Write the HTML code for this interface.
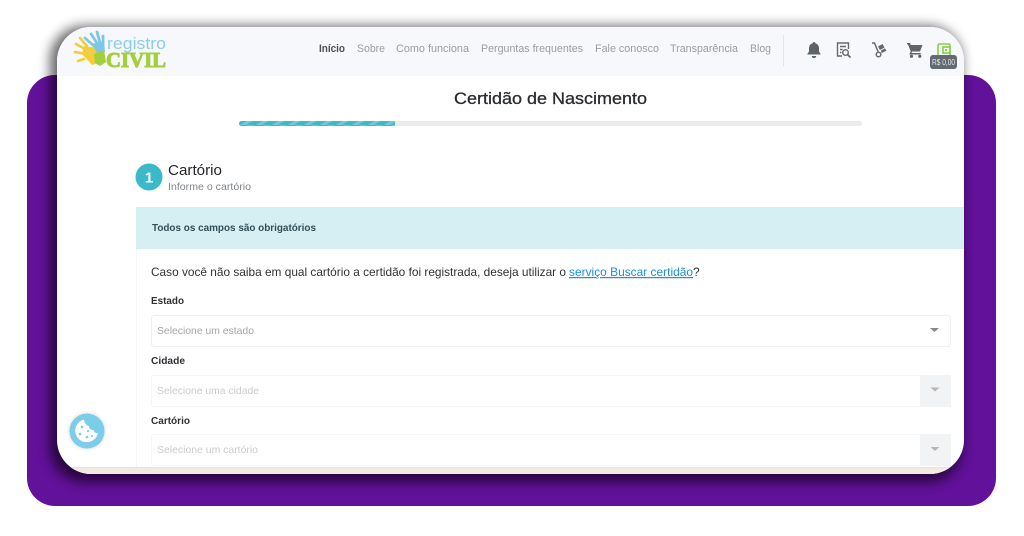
<!DOCTYPE html>
<html><head><meta charset="utf-8"><style>
html,body{margin:0;padding:0;background:#fff;width:1024px;height:536px;overflow:hidden}
svg{display:block}
text{font-family:"Liberation Sans",sans-serif}
text.slab{font-family:"Liberation Serif",serif}
</style></head><body>
<svg width="1024" height="536" viewBox="0 0 1024 536" xmlns="http://www.w3.org/2000/svg">
<defs>
<filter id="s" x="-10%" y="-10%" width="120%" height="125%"><feGaussianBlur stdDeviation="6"/></filter>
<filter id="sc" x="-30%" y="-30%" width="160%" height="160%"><feGaussianBlur stdDeviation="1.5"/></filter>
<filter id="b" x="-5%" y="-5%" width="110%" height="110%"><feGaussianBlur stdDeviation="0.3"/></filter>
<clipPath id="card"><rect x="57" y="27" width="907" height="447" rx="34"/></clipPath>
<pattern id="st" width="16" height="5" patternUnits="userSpaceOnUse"><rect width="16" height="5" fill="#3bb9c9"/><path d="M0 5L8 0H14L6 5Z" fill="#6ccdd8"/></pattern>
</defs>
<rect x="27" y="75" width="969" height="431" rx="28" fill="#62119a"/>
<rect x="50" y="26" width="912" height="456" rx="34" fill="#000" opacity=".6" filter="url(#s)"/>
<g clip-path="url(#card)">
<rect x="57" y="27" width="907" height="447" fill="#fff"/>
<rect x="57" y="27" width="907" height="49" fill="#f7f8fb"/>
<rect x="57" y="468" width="907" height="6" fill="#f3ebe3"/>
<rect x="57" y="467" width="907" height="1" fill="#e4e4e4"/>
<rect x="136" y="207" width="840" height="42" fill="#d5eff3"/>
<rect x="136" y="249" width="1" height="218" fill="#f3f5f6"/>
</g>

<!-- logo -->
<g filter="url(#b)">
<g stroke="#f2cd3d" stroke-width="2.600" stroke-linecap="round" fill="none">
<path d="M86 54L75 52M85 49L76 44M87 46L80 38M84 59L78 61"/>
</g>
<path d="M84 46L98 48L101 62L92 65L82 54Z" fill="#f2cd3d"/>
<g stroke="#7cc7e6" stroke-width="2.800" stroke-linecap="round" fill="none">
<path d="M94 46L85 38M97 43L91 34M100 43L97 32M103 45L103 36"/>
</g>
<path d="M92 44L104 41L105 52L97 53Z" fill="#7cc7e6"/>
<path d="M94 54L104 50L106 62L100 66L95 63Z" fill="#a4cf3d"/>
<text x="107" y="49" font-size="17" fill="#8ccdec" textLength="59" lengthAdjust="spacingAndGlyphs" font-weight="normal">registro</text>
<text class="slab" x="106" y="67" font-size="21" font-weight="bold" fill="#a4cf3d" stroke="#a4cf3d" stroke-width="1" textLength="60" lengthAdjust="spacingAndGlyphs">CIVIL</text>
</g>

<!-- nav -->
<g font-size="11" fill="#9b9da0" filter="url(#b)">
<text x="319" y="52" fill="#4c4f54" font-weight="bold" textLength="26" lengthAdjust="spacingAndGlyphs">Início</text>
<text x="357" y="52" textLength="28" lengthAdjust="spacingAndGlyphs">Sobre</text>
<text x="396" y="52" textLength="73" lengthAdjust="spacingAndGlyphs">Como funciona</text>
<text x="481" y="52" textLength="102" lengthAdjust="spacingAndGlyphs">Perguntas frequentes</text>
<text x="595" y="52" textLength="64" lengthAdjust="spacingAndGlyphs">Fale conosco</text>
<text x="670" y="52" textLength="68" lengthAdjust="spacingAndGlyphs">Transparência</text>
<text x="750" y="52" textLength="21" lengthAdjust="spacingAndGlyphs">Blog</text>
</g>
<rect x="783" y="35" width="1" height="31" fill="#e5e6e9"/>

<g filter="url(#b)">
<!-- bell -->
<path d="M814 42a1.300 1.300 0 0 1 1.300 1.300c2.600.7 3.700 2.800 3.700 5.200v3l1.500 2.200v.8h-13v-.8l1.500-2.200v-3c0-2.400 1.100-4.500 3.700-5.200A1.300 1.300 0 0 1 814 42ZM811.800 56h4.400a2.200 2.200 0 0 1-4.400 0Z" fill="#5d6268"/>
<!-- doc search -->
<g fill="none" stroke="#666b70" stroke-width="1.400">
<path d="M842 56h-4.500v-13h11v6"/>
<path d="M840 46.500h6M840 49.500h2.500M840 52.500h1.500"/>
<circle cx="845.500" cy="52.500" r="2.800"/>
<path d="M847.500 54.500L850.500 57.500" stroke-width="1.800"/>
</g>
<!-- hand truck -->
<g fill="none" stroke="#666b70" stroke-width="1.500">
<path d="M872 43h2.500l3.500 8.500"/>
<circle cx="878.500" cy="54.500" r="2.300"/>
</g>
<path d="M878 46.500l4.500-2.500 2 3.500-4.500 2.500ZM881 50.500l4-2.200 1.300 2.500-4.800 2.500Z" fill="#666b70"/>
<!-- cart -->
<path d="M907 43h3l.8 2h11.700l-2.500 6.500h-7.800l-.8 1.500h9.300v1.500h-11.500l1.500-3-2.700-7H907Z" fill="#60656b"/>
<circle cx="911.500" cy="56.300" r="1.600" fill="#60656b"/><circle cx="919.800" cy="56.300" r="1.600" fill="#60656b"/>
<!-- wallet -->
<g fill="none" stroke="#85cf4a" stroke-width="1.600">
<rect x="938" y="44" width="12" height="12" rx="1.500"/>
<rect x="943" y="47" width="7" height="6"/>
</g>
<rect x="945" y="49" width="2" height="2" fill="#85cf4a"/>
</g>
<rect x="930" y="55" width="27" height="14" rx="3" fill="#626a72"/>
<text x="932" y="65" font-size="8.500" fill="#e6e8ea" textLength="23" lengthAdjust="spacingAndGlyphs">R$ 0,00</text>

<!-- title -->
<text x="454" y="104" font-size="17" fill="#2a2c2f" stroke="#2a2c2f" stroke-width=".3" textLength="193" lengthAdjust="spacingAndGlyphs">Certidão de Nascimento</text>
<rect x="239" y="121" width="623" height="5" rx="2.500" fill="#e9ebed"/>
<path d="M241.500 121H395V126H241.500A2.500 2.500 0 0 1 241.500 121Z" fill="url(#st)"/>

<!-- step -->
<circle cx="149" cy="177" r="13.500" fill="#3bb9c9"/>
<text x="149" y="182.500" font-size="15" font-weight="bold" fill="#fff" text-anchor="middle">1</text>
<g filter="url(#b)">
<text x="168" y="175" font-size="14.500" fill="#26282b" textLength="54" lengthAdjust="spacingAndGlyphs">Cartório</text>
<text x="168" y="190" font-size="10.500" fill="#80858a" textLength="83" lengthAdjust="spacingAndGlyphs">Informe o cartório</text>
<text x="152" y="231" font-size="10.500" font-weight="bold" fill="#315056" textLength="164" lengthAdjust="spacingAndGlyphs">Todos os campos são obrigatórios</text>
<text x="151" y="276" font-size="12" fill="#2f3235" textLength="415" lengthAdjust="spacingAndGlyphs">Caso você não saiba em qual cartório a certidão foi registrada, deseja utilizar o</text>
<text x="569" y="276" font-size="12" fill="#1a8fe3" text-decoration="underline" textLength="124" lengthAdjust="spacingAndGlyphs">serviço Buscar certidão</text>
<text x="693" y="276" font-size="12" fill="#2f3235">?</text>
<g font-size="10.500" font-weight="bold" fill="#2e3135">
<text x="151" y="304" textLength="33" lengthAdjust="spacingAndGlyphs">Estado</text>
<text x="151" y="364" textLength="34" lengthAdjust="spacingAndGlyphs">Cidade</text>
<text x="151" y="424" textLength="39" lengthAdjust="spacingAndGlyphs">Cartório</text>
</g>
</g>

<!-- fields -->
<rect x="151.500" y="315.500" width="799" height="31" rx="3" fill="#fff" stroke="#eeeff1"/>
<rect x="151.500" y="375.500" width="799" height="31" rx="2" fill="#fff" stroke="#f4f5f6"/>
<rect x="151.500" y="434.500" width="799" height="31" rx="2" fill="#fff" stroke="#f4f5f6"/>
<rect x="920" y="375" width="31" height="32" fill="#f2f3f4"/>
<rect x="920" y="434" width="31" height="32" fill="#f2f3f4"/>
<g filter="url(#b)">
<text x="157" y="334" font-size="10.500" fill="#a3a6aa" textLength="97" lengthAdjust="spacingAndGlyphs">Selecione um estado</text>
<text x="157" y="394" font-size="10.500" fill="#c9cbce" textLength="102" lengthAdjust="spacingAndGlyphs">Selecione uma cidade</text>
<text x="157" y="453" font-size="10.500" fill="#c9cbce" textLength="101" lengthAdjust="spacingAndGlyphs">Selecione um cartório</text>
</g>
<path d="M930 328h9l-4.500 4Z" fill="#85898e"/>
<path d="M930.500 387.500h9l-4.500 4Z" fill="#b4b7ba"/>
<path d="M930.500 447h9l-4.500 4Z" fill="#b4b7ba"/>

<!-- cookie -->
<circle cx="87" cy="431" r="18.500" fill="#000" opacity=".1" filter="url(#sc)"/>
<circle cx="87" cy="431" r="17.500" fill="#7bcdea"/>
<path d="M84 419.500a11.500 11.500 0 1 0 14 13.500c-2 .5-4-.5-4.500-3-2.500.3-4.500-1.500-4.500-4-2.500-.3-4.500-3-5-6.500Z" fill="#fff"/>
<g fill="#7bcdea"><circle cx="82" cy="427" r="1.300"/><circle cx="88" cy="431" r="1.100"/><circle cx="80" cy="434" r="1.300"/><circle cx="87" cy="437" r="1.300"/><circle cx="92" cy="436" r="1"/></g>
</svg>
</body></html>
